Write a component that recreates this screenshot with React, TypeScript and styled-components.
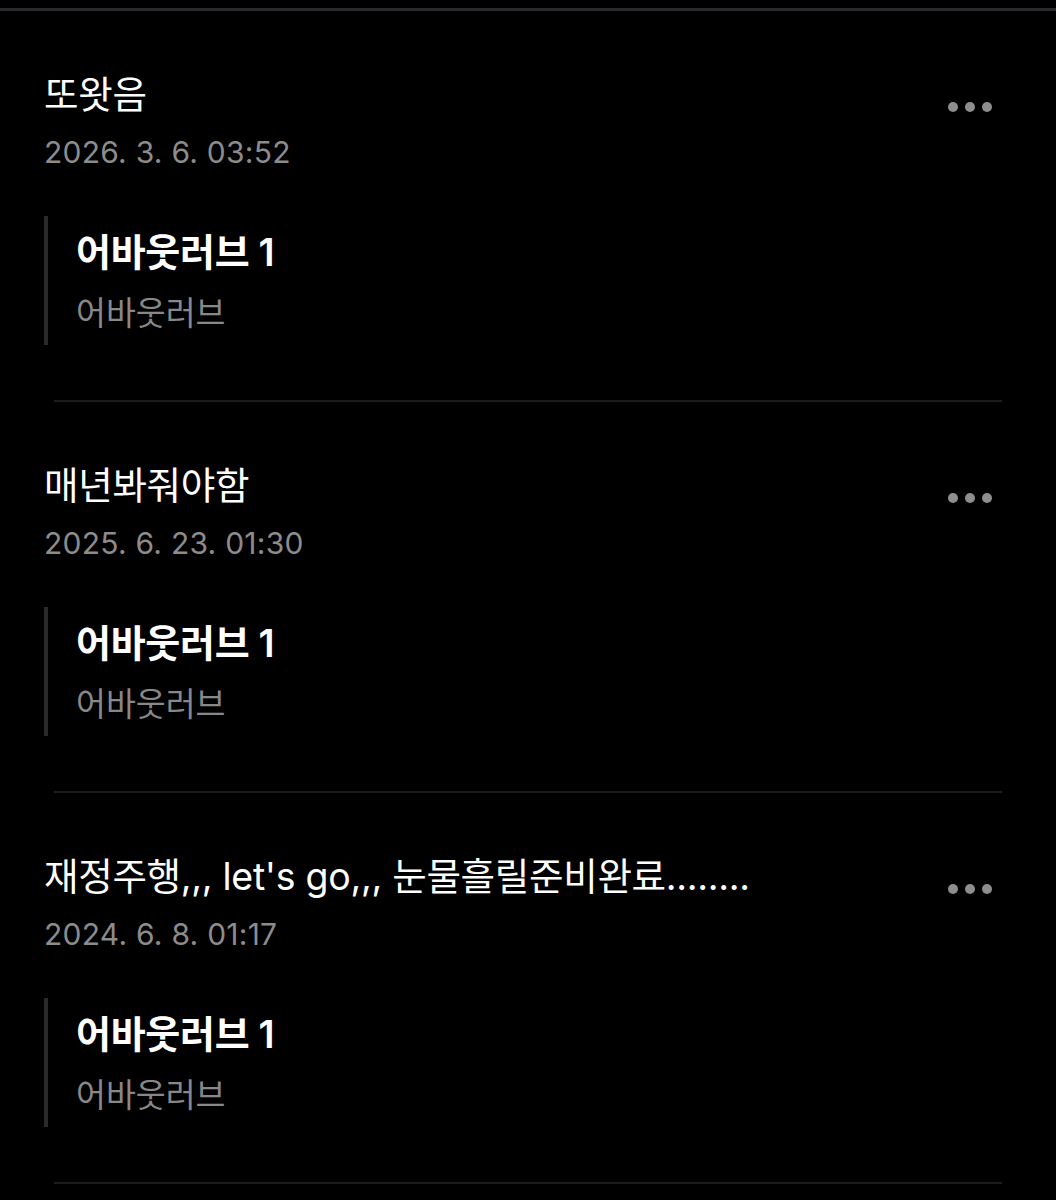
import * as React from 'react';
import styled, { createGlobalStyle } from 'styled-components';

const GlobalStyle = createGlobalStyle`
  html, body {
    margin: 0;
    padding: 0;
    background: #000;
  }
  body {
    font-family: Inter, 'Noto Sans CJK KR', sans-serif;
    color: #fff;
  }
`;

const Page = styled.div`
  background: #000;
  min-height: 1200px;
  padding-top: 8px;
`;

const TopBorder = styled.div`
  height: 3px;
  background: #2a2a2e;
`;

const List = styled.ul`
  list-style: none;
  margin: 0;
  padding: 0;
`;

const Item = styled.li`
  padding-top: 62px;
`;

const Header = styled.div`
  display: flex;
  justify-content: space-between;
  align-items: flex-start;
  padding: 0 64px 0 44px;
`;

const TitleBlock = styled.div`
  display: flex;
  flex-direction: column;
  gap: 15px;
`;

const Title = styled.h2`
  margin: 0;
  font-size: 37.5px;
  font-weight: 400;
  line-height: 44px;
  letter-spacing: -0.3px;
  color: #fff;
`;

const Date = styled.time`
  font-size: 30px;
  line-height: 40px;
  color: #8c8c8c;
  letter-spacing: 0.25px;
`;

const MoreButton = styled.button`
  display: flex;
  gap: 7px;
  margin-top: 29px;
  padding: 0;
  border: 0;
  background: none;
  cursor: pointer;
`;

const Dot = styled.span`
  width: 10px;
  height: 10px;
  border-radius: 50%;
  background: #8e8e8e;
`;

const Quote = styled.blockquote`
  margin: 44px 0 0 44px;
  padding: 16px 0 11px 28px;
  border-left: 4px solid #2a2a2a;
  display: flex;
  flex-direction: column;
  gap: 22px;
`;

const QuoteTitle = styled.div`
  font-size: 38px;
  font-weight: 600;
  line-height: 40px;
  letter-spacing: -0.3px;
  color: #fff;
`;

const QuoteSub = styled.div`
  font-size: 32.5px;
  line-height: 40px;
  color: #888;
`;

const Divider = styled.hr`
  margin: 55px 54px 0;
  border: 0;
  height: 2px;
  background: #1c1c1c;
`;

const posts = [
  { title: '또왓음', date: '2026. 3. 6. 03:52' },
  { title: '매년봐줘야함', date: '2025. 6. 23. 01:30' },
  { title: "재정주행,,, let's go,,, 눈물흘릴준비완료........", date: '2024. 6. 8. 01:17' },
];

export default function App() {
  return (
    <Page>
      <GlobalStyle />
      <TopBorder />
      <List>
        {posts.map((p) => (
          <Item key={p.date}>
            <Header>
              <TitleBlock>
                <Title>{p.title}</Title>
                <Date>{p.date}</Date>
              </TitleBlock>
              <MoreButton aria-label="더보기">
                <Dot />
                <Dot />
                <Dot />
              </MoreButton>
            </Header>
            <Quote>
              <QuoteTitle>어바웃러브 1</QuoteTitle>
              <QuoteSub>어바웃러브</QuoteSub>
            </Quote>
            <Divider />
          </Item>
        ))}
      </List>
    </Page>
  );
}
